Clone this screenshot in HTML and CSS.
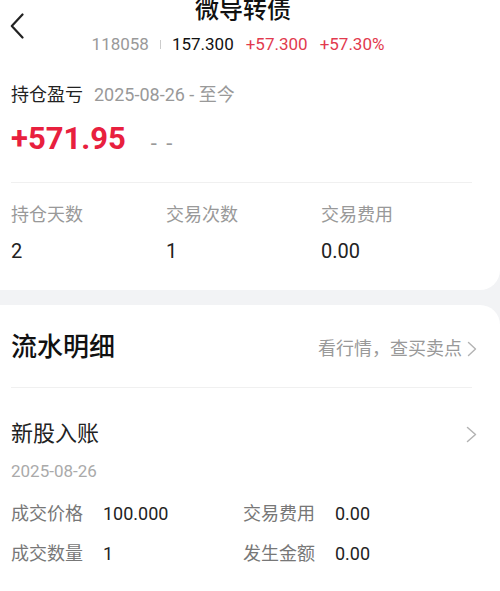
FILE: index.html
```html
<!DOCTYPE html>
<html lang="zh-CN">
<head>
    <meta charset="UTF-8">
    <meta name="viewport" content="width=device-width, initial-scale=1.0">
    <title>微导转债</title>
    <link rel="stylesheet" href="styles.css">
</head>
<body>

    <!-- Position Card -->
    <section class="card card-top">
        <header class="nav">
            <div class="nav-back">
                <svg width="14" height="26" viewBox="0 0 14 26">
                    <polyline points="12.5,1.5 1.8,13 12.5,24.5" fill="none" stroke="#222" stroke-width="2.2" stroke-linecap="round" stroke-linejoin="round"/>
                </svg>
            </div>
            <div class="nav-center">
                <h1 class="nav-title">微导转债</h1>
                <p class="quote">
                    <span class="code">118058</span>
                    <span class="sep"></span>
                    <span class="price">157.300</span>
                    <span class="up">+57.300</span>
                    <span class="up">+57.30%</span>
                </p>
            </div>
        </header>

        <div class="pnl-head">
            <span class="pnl-label">持仓盈亏</span>
            <span class="pnl-range">2025-08-26 - 至今</span>
        </div>
        <div class="pnl-value">
            <span class="pnl-num">+571.95</span>
            <span class="pnl-rate">- -</span>
        </div>

        <div class="divider"></div>

        <div class="stats">
            <div class="stat">
                <p class="stat-label">持仓天数</p>
                <p class="stat-value">2</p>
            </div>
            <div class="stat">
                <p class="stat-label">交易次数</p>
                <p class="stat-value">1</p>
            </div>
            <div class="stat">
                <p class="stat-label">交易费用</p>
                <p class="stat-value">0.00</p>
            </div>
        </div>
    </section>

    <!-- Flow Detail Card -->
    <section class="card card-bottom">
        <div class="flow-head">
            <h2 class="flow-title">流水明细</h2>
            <div class="flow-link">
                看行情，查买卖点
                <svg width="10" height="16" viewBox="0 0 10 16">
                    <polyline points="1.5,1.5 8.5,8 1.5,14.5" fill="none" stroke="#b3b3b3" stroke-width="1.4" stroke-linecap="round" stroke-linejoin="round"/>
                </svg>
            </div>
        </div>

        <div class="divider"></div>

        <div class="entry">
            <div class="entry-head">
                <span class="entry-title">新股入账</span>
                <svg width="11" height="17" viewBox="0 0 11 17">
                    <polyline points="1.5,1.5 9.5,8.5 1.5,15.5" fill="none" stroke="#b3b3b3" stroke-width="1.5" stroke-linecap="round" stroke-linejoin="round"/>
                </svg>
            </div>
            <p class="entry-date">2025-08-26</p>
            <div class="entry-grid">
                <div class="pair"><span class="pair-label">成交价格</span><span class="pair-value">100.000</span></div>
                <div class="pair"><span class="pair-label">交易费用</span><span class="pair-value">0.00</span></div>
                <div class="pair"><span class="pair-label">成交数量</span><span class="pair-value">1</span></div>
                <div class="pair"><span class="pair-label">发生金额</span><span class="pair-value">0.00</span></div>
            </div>
        </div>
    </section>

</body>
</html>
```

FILE: styles.css
```css
/* Basic Reset */
* {
    margin: 0;
    padding: 0;
    box-sizing: border-box;
}

body {
    font-family: Roboto, "Noto Sans CJK SC", sans-serif;
    background-color: #f2f3f5;
    color: #222;
    width: 500px;
    overflow: hidden;
}

/* Cards */
.card {
    background-color: #fff;
    padding-left: 11px;
}

.card-top {
    border-radius: 0 0 20px 0;
    padding-bottom: 25px;
}

.card-bottom {
    margin-top: 15px;
    border-radius: 0 20px 0 0;
    padding-top: 24px;
    padding-bottom: 40px;
}

.divider {
    height: 1px;
    background-color: #f0f0f0;
    margin-right: 28px;
}

/* Header */
.nav {
    display: grid;
    grid-template-columns: 30px 1fr 44px;
    margin-left: -11px;
}

.nav-back {
    padding: 13px 0 0 10px;
}

.nav-back svg {
    display: block;
}

.nav-center {
    text-align: center;
}

.nav-title {
    font-size: 24px;
    font-weight: 500;
    line-height: 20px;
    color: #111;
}

.quote {
    margin-top: 13px;
    margin-right: 10px;
    font-size: 17px;
    line-height: 22px;
    display: flex;
    justify-content: center;
    align-items: center;
}

.code {
    color: #999;
}

.sep {
    display: inline-block;
    width: 1px;
    height: 9px;
    background-color: #ccc;
    margin: 0 11px;
}

.price {
    color: #111;
}

.up {
    color: #e23a4e;
    margin-left: 12px;
}

/* Profit & Loss */
.pnl-head {
    margin-top: 28px;
    line-height: 24px;
    display: flex;
    align-items: center;
}

.pnl-label {
    font-size: 18px;
    color: #222;
}

.pnl-range {
    font-size: 18px;
    color: #999;
    margin-left: 11px;
}

.pnl-value {
    margin-top: 12px;
    height: 40px;
    display: flex;
    align-items: center;
}

.pnl-num {
    font-size: 31px;
    font-weight: 700;
    line-height: 40px;
    color: #e8203e;
}

.pnl-rate {
    font-size: 22px;
    color: #999;
    margin-left: 25px;
    margin-top: 8px;
    letter-spacing: 2px;
}

.card-top .divider {
    margin-top: 23px;
}

/* Stats */
.stats {
    display: flex;
    margin-top: 20px;
}

.stat {
    width: 155px;
}

.stat-label {
    font-size: 18px;
    line-height: 24px;
    color: #999;
}

.stat-value {
    margin-top: 10px;
    font-size: 20px;
    line-height: 28px;
    color: #222;
}

/* Flow Detail */
.flow-head {
    display: flex;
    justify-content: space-between;
    align-items: center;
    padding-right: 23px;
}

.flow-title {
    font-size: 26px;
    font-weight: 500;
    line-height: 36px;
    color: #111;
}

.flow-link {
    display: flex;
    align-items: center;
    gap: 5px;
    font-size: 18px;
    line-height: 24px;
    color: #999;
    margin-top: 4px;
}

.card-bottom .divider {
    margin-top: 22px;
}

.entry {
    padding-top: 31px;
    padding-right: 23px;
}

.entry-head {
    display: flex;
    justify-content: space-between;
    align-items: center;
    height: 30px;
}

.entry-title {
    font-size: 22px;
    line-height: 30px;
    color: #222;
}

.entry-date {
    margin-top: 10px;
    font-size: 17px;
    line-height: 24px;
    color: #aaa;
}

.entry-grid {
    display: grid;
    grid-template-columns: 232px 1fr;
    row-gap: 14px;
    margin-top: 18px;
}

.pair {
    display: flex;
    line-height: 26px;
}

.pair-label {
    width: 92px;
    font-size: 18px;
    color: #777;
}

.pair-value {
    font-size: 18px;
    color: #222;
}
```
